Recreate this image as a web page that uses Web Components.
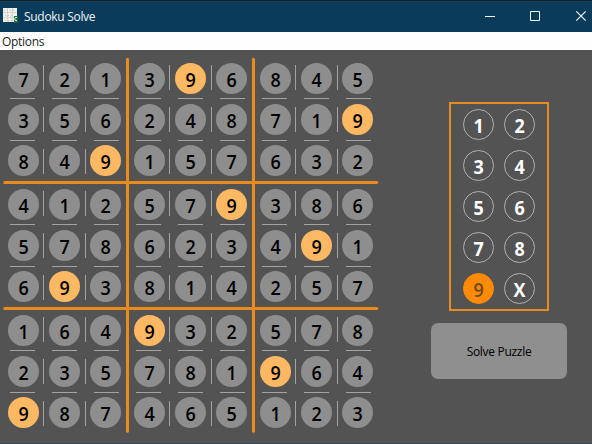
<!DOCTYPE html>
<html lang="en">
<head>
<meta charset="utf-8">
<title>Sudoku Solve</title>
<style>
html,body{margin:0;height:100%;overflow:hidden}
body{font-family:"Open Sans","Noto Sans",sans-serif;background:#535353}
</style>
</head>
<body>
<sudoku-app></sudoku-app>
<script>
class Base extends HTMLElement {
  connectedCallback() {
    if (this.shadowRoot) return;
    this.attachShadow({mode: "open"}).innerHTML = this.render();
  }
}

customElements.define("title-bar", class extends Base {
  render() {
    return `<style>
:host{display:flex;box-sizing:border-box;height:32px;background:#0b3b5b;border-top:1px solid #15202b;box-shadow:inset 0 1px #1f3f56;align-items:center;padding-left:3px;color:#f0f5f8}
.icon{width:16px;height:16px;display:block;margin-top:-1px}
.name{font-size:12px;line-height:16px;margin-left:5px;flex:1;letter-spacing:-.3px}
.ctl{display:block;width:126px;height:31px}
</style>
<svg class="icon" viewBox="0 0 16 16"><path fill="#f1f0ea" d="M0 0h14v14H0z"/><path stroke="#d3d5d2" stroke-width="1" d="M0 4.5h14M0 9.5h14M4.5 0v14M9.5 0v14" fill="none"/><path stroke="#c2c4c1" stroke-dasharray="1 2" d="M1 2.5h12M2 7.5h8M2 12.5h7" fill="none"/><path fill="#1c6a3a" d="M11 8h4v7h-4z"/><path d="M14 9.4h-1.2q-1 0-1 1.6t1 1.600H14" stroke="#e6f2e8" fill="none"/></svg>
<span class="name"><slot></slot></span>
<svg class="ctl" viewBox="0 0 126 31" fill="none" stroke="#eef6f8"><path d="M19 15.500h10"/><path d="M64.500 10.500h9v9h-9z"/><path d="M110.300 10.300l9.400 9.400m0-9.400l-9.400 9.400" stroke-width="1.200"/></svg>`;
  }
});

customElements.define("menu-bar", class extends Base {
  render() {
    return `<style>:host{display:flex;height:18px;background:#fefefe;color:#222;font-size:12px;line-height:19px;padding-left:2px;letter-spacing:-.3px}</style><slot></slot>`;
  }
});

customElements.define("number-disc", class extends Base {
  render() {
    return `<style>
:host{display:grid;place-items:center;box-sizing:border-box;width:31px;height:31px;border-radius:50%;background:#8e8e8e;color:#000;font-weight:600;font-size:19.500px}
:host([lit]){background:#fdb863}
:host([key]){background:none;border:1px solid #b0b0b0;color:#fff;font-weight:700}
:host([key][lit]){background:#ff8a05;border-color:#ff8a05;color:#6b4a1c;font-weight:600}
span{line-height:31px;height:31px;padding-top:1px;box-sizing:border-box;display:block;transform:scaleX(.92)}
:host([key]) span{height:29px;line-height:29px}
</style><span><slot></slot></span>`;
  }
});

customElements.define("sudoku-block", class extends Base {
  render() {
    let lines = "";
    for (let r = 0; r < 3; r++) for (let c = 0; c < 2; c++) {
      lines += `M${35.500 + 42 * c} ${2 + 42 * r}v25M${2 + 42 * r} ${35.500 + 42 * c}h25`;
    }
    const discs = [...this.getAttribute("values")]
      .map(n => `<number-disc${n === "9" ? " lit" : ""}>${n}</number-disc>`).join("");
    return `<style>
:host{display:grid;position:relative;grid-template-columns:repeat(3,31px);grid-auto-rows:31px;gap:10px}
svg{position:absolute;left:0;top:0;width:113px;height:113px}
</style>${discs}<svg viewBox="0 0 113 113"><path d="${lines}" stroke="#a3a3a3" fill="none"/></svg>`;
  }
});

customElements.define("sudoku-board", class extends Base {
  render() {
    const blocks = ["721356849", "396248157", "845719632", "412578693", "579623814", "386491257", "164235987", "932781465", "578964123"];
    return `<style>
:host{display:grid;position:relative;box-sizing:border-box;width:381px;padding:13px 0 0 8px;grid-template-columns:repeat(3,113px);grid-auto-rows:113px;gap:13px}
svg{position:absolute;left:0;top:0;width:381px;height:392px}
</style>${blocks.map(v => `<sudoku-block values="${v}"></sudoku-block>`).join("")}
<svg viewBox="0 0 381 392" fill="none" stroke="#ec8b1d" stroke-width="3" stroke-linecap="round"><path d="M127.500 9.300v372M253.500 9.300v372M4.800 132.500h372M4.800 258.500h372"/></svg>`;
  }
});

customElements.define("number-pad", class extends Base {
  render() {
    return `<style>
:host{display:grid;box-sizing:border-box;width:100px;height:209px;border:2px solid #e68a22;padding:5px 12px;grid-template-columns:31px 31px;grid-auto-rows:31px;gap:10px}
</style>${[..."123456789X"].map(n => `<number-disc key${n === "9" ? " lit" : ""}>${n}</number-disc>`).join("")}`;
  }
});

customElements.define("action-button", class extends Base {
  render() {
    return `<style>
:host{display:block}
button{display:block;width:136px;height:56px;border:0;border-radius:7px;background:#8f8f8f;color:#000;font:12px "Open Sans","Noto Sans",sans-serif;padding:1px 0 0;letter-spacing:-.3px}
</style><button><slot></slot></button>`;
  }
});

customElements.define("sudoku-app", class extends Base {
  render() {
    return `<style>
:host{display:flex;flex-direction:column;width:592px;height:444px;box-sizing:border-box;background:#535353;border-bottom:1px solid #2e4a5e}
main{display:flex;flex:1}
aside{display:flex;flex-direction:column;align-items:center;gap:12px;padding-top:52px;margin-left:50px;width:136px}
</style>
<title-bar>Sudoku Solve</title-bar>
<menu-bar>Options</menu-bar>
<main><sudoku-board></sudoku-board><aside><number-pad></number-pad><action-button>Solve Puzzle</action-button></aside></main>`;
  }
});
</script>
</body>
</html>
